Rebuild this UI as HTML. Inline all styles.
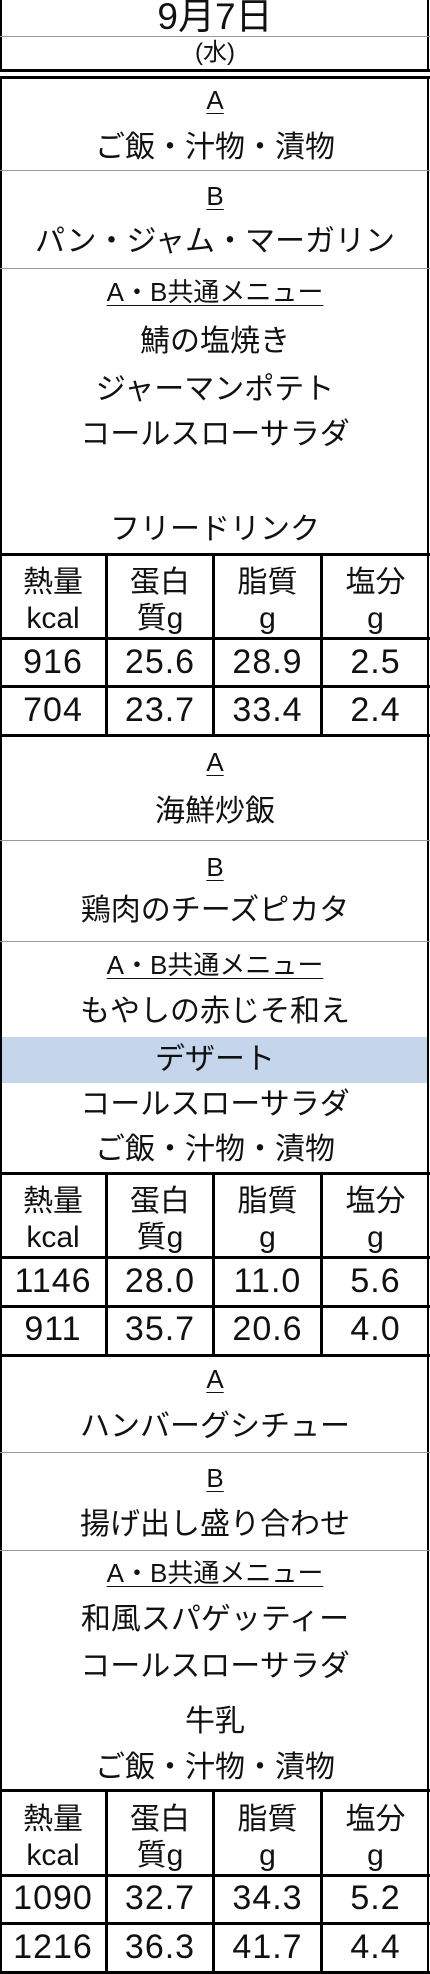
<!DOCTYPE html>
<html><head><meta charset="utf-8"><style>
*{margin:0;padding:0;box-sizing:border-box}
body{width:430px;height:1974px;background:#fff;position:relative;overflow:hidden;font-family:"Liberation Sans","Noto Sans CJK JP",sans-serif;color:#111}
.t{position:absolute;left:0;width:430px;text-align:center;height:40px;line-height:40px;font-size:30px;white-space:nowrap}
.l{font-size:26px}
.l span{text-decoration:underline;text-underline-offset:4px;text-decoration-thickness:1px}
.h{position:absolute;left:0;width:430px;height:1px;background:#999}
.k{position:absolute;left:0;width:430px;height:3px;background:#000}
.v{position:absolute;width:3px;background:#000}
.vb{position:absolute;top:0;width:2px;height:1974px;background:#000}
.c{position:absolute;text-align:center;height:40px;line-height:40px;white-space:nowrap}
.n{font-size:34px;letter-spacing:1px}
.hd{font-size:30px;line-height:36px;height:36px}
</style></head><body>
<div class="vb" style="left:0"></div><div class="vb" style="left:427px"></div>
<div class="t" style="top:-3px;font-size:37px">9月7日</div>
<div class="h" style="top:36px"></div>
<div class="t" style="top:33px;font-size:24px">(水)</div>
<div class="k" style="top:69px"></div>
<div style="position:absolute;top:72px;left:0;width:430px;height:4px;background:#fff"></div>
<div class="k" style="top:76px"></div>

<div class="t l" style="top:80px"><span>A</span></div>
<div class="t" style="top:128px">ご飯・汁物・漬物</div>
<div class="h" style="top:170px"></div>
<div class="t l" style="top:176px"><span>B</span></div>
<div class="t" style="top:222px">パン・ジャム・マーガリン</div>
<div class="h" style="top:268px"></div>
<div class="t l" style="top:272px"><span>A・B共通メニュー</span></div>
<div class="t" style="top:322px">鯖の塩焼き</div>
<div class="t" style="top:370px">ジャーマンポテト</div>
<div class="t" style="top:415px">コールスローサラダ</div>
<div class="t" style="top:510px">フリードリンク</div>

<div class="k" style="top:553px"></div>
<div class="k" style="top:637px"></div>
<div class="k" style="top:685px"></div>
<div class="k" style="top:734px"></div>
<div class="v" style="left:105px;top:553px;height:184px"></div>
<div class="v" style="left:212px;top:553px;height:184px"></div>
<div class="v" style="left:320px;top:553px;height:184px"></div>
<div class="c hd" style="left:0;width:106px;top:565px">熱量</div>
<div class="c hd" style="left:0;width:106px;top:601px">kcal</div>
<div class="c hd" style="left:107px;width:106px;top:565px">蛋白</div>
<div class="c hd" style="left:107px;width:106px;top:601px">質g</div>
<div class="c hd" style="left:214px;width:107px;top:565px">脂質</div>
<div class="c hd" style="left:214px;width:107px;top:601px">g</div>
<div class="c hd" style="left:322px;width:107px;top:565px">塩分</div>
<div class="c hd" style="left:322px;width:107px;top:601px">g</div>
<div class="c n" style="left:0;width:106px;top:642px">916</div>
<div class="c n" style="left:107px;width:106px;top:642px">25.6</div>
<div class="c n" style="left:214px;width:107px;top:642px">28.9</div>
<div class="c n" style="left:322px;width:107px;top:642px">2.5</div>
<div class="c n" style="left:0;width:106px;top:690px">704</div>
<div class="c n" style="left:107px;width:106px;top:690px">23.7</div>
<div class="c n" style="left:214px;width:107px;top:690px">33.4</div>
<div class="c n" style="left:322px;width:107px;top:690px">2.4</div>

<div class="t l" style="top:742px"><span>A</span></div>
<div class="t" style="top:792px">海鮮炒飯</div>
<div class="h" style="top:840px"></div>
<div class="t l" style="top:847px"><span>B</span></div>
<div class="t" style="top:891px">鶏肉のチーズピカタ</div>
<div class="h" style="top:941px"></div>
<div class="t l" style="top:945px"><span>A・B共通メニュー</span></div>
<div class="t" style="top:992px">もやしの赤じそ和え</div>
<div style="position:absolute;left:2px;width:425px;top:1037px;height:46px;background:#c5d6ec"></div>
<div class="t" style="top:1040px">デザート</div>
<div class="t" style="top:1085px">コールスローサラダ</div>
<div class="t" style="top:1130px">ご飯・汁物・漬物</div>

<div class="k" style="top:1172px"></div>
<div class="k" style="top:1256px"></div>
<div class="k" style="top:1305px"></div>
<div class="k" style="top:1354px"></div>
<div class="v" style="left:105px;top:1172px;height:184px"></div>
<div class="v" style="left:212px;top:1172px;height:184px"></div>
<div class="v" style="left:320px;top:1172px;height:184px"></div>
<div class="c hd" style="left:0;width:106px;top:1184px">熱量</div>
<div class="c hd" style="left:0;width:106px;top:1220px">kcal</div>
<div class="c hd" style="left:107px;width:106px;top:1184px">蛋白</div>
<div class="c hd" style="left:107px;width:106px;top:1220px">質g</div>
<div class="c hd" style="left:214px;width:107px;top:1184px">脂質</div>
<div class="c hd" style="left:214px;width:107px;top:1220px">g</div>
<div class="c hd" style="left:322px;width:107px;top:1184px">塩分</div>
<div class="c hd" style="left:322px;width:107px;top:1220px">g</div>
<div class="c n" style="left:0;width:106px;top:1261px">1146</div>
<div class="c n" style="left:107px;width:106px;top:1261px">28.0</div>
<div class="c n" style="left:214px;width:107px;top:1261px">11.0</div>
<div class="c n" style="left:322px;width:107px;top:1261px">5.6</div>
<div class="c n" style="left:0;width:106px;top:1309px">911</div>
<div class="c n" style="left:107px;width:106px;top:1309px">35.7</div>
<div class="c n" style="left:214px;width:107px;top:1309px">20.6</div>
<div class="c n" style="left:322px;width:107px;top:1309px">4.0</div>

<div class="t l" style="top:1359px"><span>A</span></div>
<div class="t" style="top:1407px">ハンバーグシチュー</div>
<div class="h" style="top:1452px"></div>
<div class="t l" style="top:1458px"><span>B</span></div>
<div class="t" style="top:1505px">揚げ出し盛り合わせ</div>
<div class="h" style="top:1550px"></div>
<div class="t l" style="top:1553px"><span>A・B共通メニュー</span></div>
<div class="t" style="top:1600px">和風スパゲッティー</div>
<div class="t" style="top:1647px">コールスローサラダ</div>
<div class="t" style="top:1702px">牛乳</div>
<div class="t" style="top:1748px">ご飯・汁物・漬物</div>

<div class="k" style="top:1789px"></div>
<div class="k" style="top:1874px"></div>
<div class="k" style="top:1922px"></div>
<div class="k" style="top:1971px"></div>
<div class="v" style="left:105px;top:1789px;height:185px"></div>
<div class="v" style="left:212px;top:1789px;height:185px"></div>
<div class="v" style="left:320px;top:1789px;height:185px"></div>
<div class="c hd" style="left:0;width:106px;top:1802px">熱量</div>
<div class="c hd" style="left:0;width:106px;top:1838px">kcal</div>
<div class="c hd" style="left:107px;width:106px;top:1802px">蛋白</div>
<div class="c hd" style="left:107px;width:106px;top:1838px">質g</div>
<div class="c hd" style="left:214px;width:107px;top:1802px">脂質</div>
<div class="c hd" style="left:214px;width:107px;top:1838px">g</div>
<div class="c hd" style="left:322px;width:107px;top:1802px">塩分</div>
<div class="c hd" style="left:322px;width:107px;top:1838px">g</div>
<div class="c n" style="left:0;width:106px;top:1878px">1090</div>
<div class="c n" style="left:107px;width:106px;top:1878px">32.7</div>
<div class="c n" style="left:214px;width:107px;top:1878px">34.3</div>
<div class="c n" style="left:322px;width:107px;top:1878px">5.2</div>
<div class="c n" style="left:0;width:106px;top:1927px">1216</div>
<div class="c n" style="left:107px;width:106px;top:1927px">36.3</div>
<div class="c n" style="left:214px;width:107px;top:1927px">41.7</div>
<div class="c n" style="left:322px;width:107px;top:1927px">4.4</div>
</body></html>
